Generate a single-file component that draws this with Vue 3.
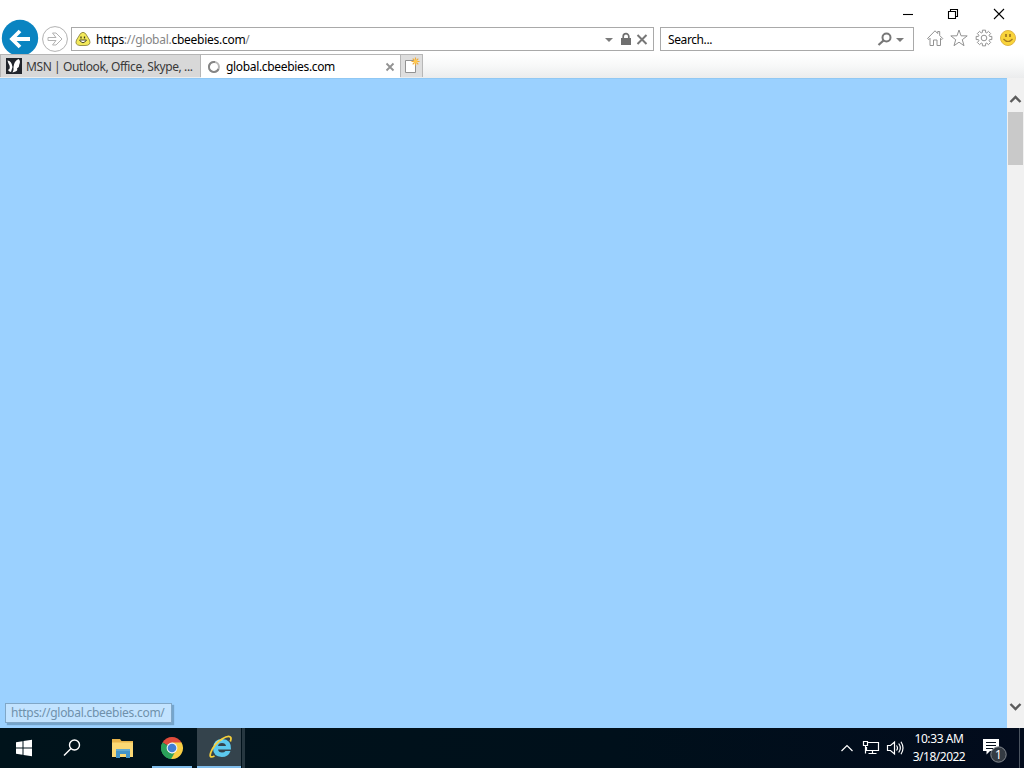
<template>
  <div class="desktop">
    <header class="chrome">
      <div class="window-buttons">
        <svg class="win-btn" viewBox="0 0 46 27"><path d="M17 14.5h10" /></svg>
        <svg class="win-btn" viewBox="0 0 46 27"><path d="M16.500 11.500h7v7h-7zM18.500 11.500v-2h7v7h-2" /></svg>
        <svg class="win-btn" viewBox="0 0 46 27"><path d="M16 9l10 10M26 9l-10 10" /></svg>
      </div>

      <div class="nav-row">
        <svg class="back" viewBox="0 0 38 38">
          <circle cx="19" cy="19" r="18.200" fill="#0a84c1" />
          <path d="M29 20H11M19 12l-8 8 8 8" fill="none" stroke="#fff" stroke-width="3.800" />
        </svg>
        <svg class="forward" viewBox="0 0 28 28">
          <circle cx="14" cy="14" r="12.400" fill="#fff" stroke="#b2b2b2" />
          <path d="M7 12.500h8l-3.500-4.500h3.500l6 6-6 6h-3.500l3.500-4.500H7z" fill="#fff" stroke="#b2b2b2" />
        </svg>

        <div class="field address">
          <svg class="favicon" viewBox="0 0 16 16">
            <path d="M5.500 2.500Q8 0 10.500 2.500L14.500 9Q16.500 14.500 10 14.500H5Q-.5 14 1.500 9z" fill="#f3e95a" stroke="#8f8740" stroke-width=".9" />
            <path d="M4.500 9Q8 14.500 11.500 9z" fill="#fff" stroke="#4d4920" stroke-width="1" />
            <path d="M6 5.500v2M9.500 5.500v2" stroke="#3b3817" stroke-width="1.300" />
          </svg>
          <span class="url"><b>https</b>://global.<b>cbeebies.com</b>/</span>
          <svg class="address-tools" viewBox="0 0 48 22">
            <path d="M4 10h8l-4 4z" fill="#7b7b7b" />
            <rect x="20" y="10" width="10" height="7" fill="#6f6f6f" />
            <path d="M22.200 10V8.500a2.800 2.800 0 0 1 5.600 0V10" fill="none" stroke="#6f6f6f" stroke-width="1.700" />
            <path d="M36.500 7l9 9M45.500 7l-9 9" stroke="#777" stroke-width="2" />
          </svg>
        </div>

        <div class="field search">
          <span class="placeholder">Search...</span>
          <svg class="search-tools" viewBox="0 0 36 22">
            <circle cx="10.500" cy="9.500" r="4" fill="none" stroke="#777" stroke-width="2" />
            <path d="M7.500 12.500l-5 4.500" stroke="#777" stroke-width="2.300" />
            <path d="M20 10h8l-4 4z" fill="#7b7b7b" />
          </svg>
        </div>

        <div class="toolbar">
          <svg viewBox="0 0 18 18"><path d="M1.500 9.500L9 1.800l2.700 2.700V2.500h2v4l3 3-1 1-1.200-1.200v7.200H11v-5.500H7.500v5.500H4V9.300l-1.200 1.200z" /></svg>
          <svg viewBox="0 0 18 18"><path d="M9 1l2 5.800 6.200.1-4.900 3.800 1.700 6L9 13.200l-5 3.500 1.700-6L.8 6.900 7 6.800z" /></svg>
          <svg viewBox="0 0 18 18"><path :d="gearPath" /><circle cx="9" cy="9" r="2.800" /></svg>
          <svg class="smile" viewBox="0 0 18 18">
            <circle class="face" cx="9" cy="9" r="7.500" />
            <path class="eyes" d="M7 5v3M11 5v3" />
            <path class="mouth" d="M4.500 10Q9 15 13.500 10" />
          </svg>
        </div>
      </div>

      <div class="tabs">
        <div class="tab">
          <svg class="tab-icon" viewBox="0 0 16 16">
            <rect width="16" height="16" fill="#20242b" />
            <path d="M1.500 2.500Q5.500 2.500 6.500 9L5 14Q2.500 13.500 2 12Q4.500 11 3.500 7.500Q2 5 1.500 2.500zM6.500 14.500Q8 12 7.500 9Q8 3 12.500 1Q15 3 13.300 6.500Q13.500 9 11 10.500Q12 12.500 9.500 13.500z" fill="#fff" />
          </svg>
          <span class="msn-label">MSN | Outlook, Office, Skype, ...</span>
        </div>
        <div class="tab active">
          <svg class="tab-icon" viewBox="0 0 16 16">
            <circle cx="8" cy="8" r="5" fill="none" stroke="#b8b8b8" stroke-width="2" />
            <path d="M12.500 10A5 5 0 1 1 9 3.100" fill="none" stroke="#858585" stroke-width="2" />
          </svg>
          <span class="page-label">global.cbeebies.com</span>
          <svg class="tab-close" viewBox="0 0 10 10"><path d="M1.500 1.500l7 7M8.500 1.500l-7 7" /></svg>
        </div>
        <div class="new-tab">
          <svg viewBox="0 0 20 22">
            <path d="M4.500 5.500h10v12h-10z" fill="#fff" stroke="#929292" />
            <path d="M14.500 2.500v8M10.500 6.500h8M11.700 3.700l5.600 5.600M17.300 3.700l-5.600 5.600" stroke="#efaa38" stroke-width="1.200" />
            <circle cx="14.500" cy="6.500" r="2" fill="#ffc84e" />
          </svg>
        </div>
      </div>
    </header>

    <main class="viewport">
      <div class="page">
        <div class="status"><span>https://global.cbeebies.com/</span></div>
      </div>
      <div class="scrollbar">
        <svg class="arrow up" viewBox="0 0 17 12"><path d="M3.500 9l5-5 5 5" /></svg>
        <div class="thumb"></div>
        <svg class="arrow down" viewBox="0 0 17 12"><path d="M3.500 4l5 5 5-5" /></svg>
      </div>
    </main>

    <footer class="taskbar">
      <div class="task">
        <svg viewBox="0 0 48 40"><path d="M16 14.200l6.500-1v6.300H16zM23.500 13l8.500-1.200v7.700h-8.500zM16 20.500h6.500v6.300l-6.500-1zM23.500 20.500H32v7.700L23.500 27z" fill="#fff" /></svg>
      </div>
      <div class="task">
        <svg viewBox="0 0 48 40"><circle cx="26.500" cy="17" r="5" fill="none" stroke="#fff" stroke-width="1.400" /><path d="M23 20.500L16 27.500" stroke="#fff" stroke-width="1.500" /></svg>
      </div>
      <div class="task explorer">
        <svg viewBox="0 0 48 40">
          <path d="M14 11h8l1.500 2H35v16H14z" fill="#e8b44a" />
          <path d="M14 14.500h21V29H14" fill="#fbd874" />
          <path d="M18 30v-8h14v8h-4v-4h-6v4z" fill="#4494c8" />
          <path d="M18 21h14v2H18z" fill="#62a9d0" />
        </svg>
      </div>
      <div class="task running google">
        <svg viewBox="0 0 40 40">
          <path d="M20 20L10.500 14.500A11 11 0 0 1 29.500 14.500z" fill="#df4c3c" />
          <path d="M20 20V31A11 11 0 0 1 10.500 14.500z" fill="#2ba15a" />
          <path d="M20 20L29.500 14.500A11 11 0 0 1 19 31L24 22z" fill="#f9ce44" />
          <path d="M20 14.500h9.500L24.700 22.800 19 31l-3.700-8.300z" fill="#f9ce44" />
          <path d="M15.200 22.800L20 25.500 22.500 25 19 31A11 11 0 0 1 10.500 14.500z" fill="#2ba15a" />
          <circle cx="20" cy="20" r="5.400" fill="#edf3fa" />
          <circle cx="20" cy="20" r="4.300" fill="#427fd4" />
        </svg>
      </div>
      <div class="task running current">
        <svg viewBox="0 0 44 40">
          <path fill-rule="evenodd" d="M34 21.500H21Q21.500 24.500 25 24.500Q27.500 24.500 28.500 23H33.500Q31.500 29 24.800 29Q16 28.500 16 20Q16.500 11 25.300 11Q34.500 11.500 34 21.500zM21 18h8q-.5-3-4-3t-4 3z" fill="#5cc9ee" />
          <path d="M17.500 17Q19.500 12 25.500 12" fill="none" stroke="#b1edfc" stroke-width="1" />
          <path d="M17.500 28Q11.500 31 13.800 24.500Q17 16 25 11Q32 6.700 33.800 9.500Q34.500 11 33.300 13.500" fill="none" stroke="#f5cf3c" stroke-width="1.800" />
        </svg>
      </div>
      <div class="task-edge"></div>

      <div class="tray">
        <svg class="chevron" viewBox="0 0 14 10"><path d="M1.500 8L7 2.500 12.500 8" /></svg>
        <svg class="network" viewBox="0 0 18 16"><path d="M6 2.500h10.500v8H4.500V7M10.500 10.500v3M6.500 13.500h8M1.500 1.500h4v4h-4zM3.500 5.500v8" /></svg>
        <svg class="volume" viewBox="0 0 18 16"><path d="M1.500 5.500h3l4-3.500v12l-4-3.500h-3zM10.500 5.500q2 2.500 0 5M12.700 3.500q3.300 4.500 0 9M15 1.700q4 6.300 0 12.600" /></svg>
        <div class="clock">
          <span class="time">10:33 AM</span>
          <span class="date">3/18/2022</span>
        </div>
        <svg class="notice" viewBox="0 0 26 26">
          <path d="M1 2h16v12H8l-3.500 3.500V14H1z" fill="#fff" />
          <path d="M4 5.500h10M4 8.500h10M4 11.500h7" stroke="#07111e" stroke-width="1.100" />
          <circle cx="16.500" cy="17.500" r="7.700" fill="#343b43" stroke="#858a90" />
          <text x="16.500" y="22" text-anchor="middle">1</text>
        </svg>
        <div class="show-desktop"></div>
      </div>
    </footer>
  </div>
</template>

<script setup>
// outline of an 8-tooth cog centred on 9,9
const points = [];
for (let i = 0; i < 8; i++) {
  const base = (i * Math.PI) / 4;
  [[-0.28, 5.8], [-0.2, 8], [0.2, 8], [0.28, 5.8]].forEach(([offset, r]) => {
    const x = 9 + r * Math.cos(base + offset);
    const y = 9 + r * Math.sin(base + offset);
    points.push(`${x.toFixed(2)} ${y.toFixed(2)}`);
  });
}
const gearPath = `M${points.join('L')}Z`;
</script>

<style>
body {
  overflow: hidden;
}
</style>

<style scoped>
.desktop {
  width: 1024px;
  height: 768px;
  display: flex;
  flex-direction: column;
  overflow: hidden;
  font: 12px/16px "Noto Sans", "Open Sans", sans-serif;
  color: #000;
}

.desktop * {
  box-sizing: border-box;
}

svg {
  display: block;
  flex: none;
}

.chrome {
  height: 78px;
  flex: none;
  background: linear-gradient(#fff 0, #fff 54px, #f7f8f8 66px, #ebeced 78px);
}

.window-buttons {
  height: 27px;
  display: flex;
  justify-content: flex-end;
}

.win-btn {
  width: 46px;
  height: 27px;
  fill: none;
  stroke: #000;
  stroke-width: 1.1;
}

.nav-row {
  height: 27px;
  display: flex;
  align-items: flex-start;
}

.back {
  width: 38px;
  height: 38px;
  margin: -8px 0 0 1px;
}

.forward {
  width: 28px;
  height: 28px;
  margin: -2px 2px 0 2px;
}

.field {
  height: 24px;
  border: 1px solid #a9a9a9;
  background: #fff;
  display: flex;
  align-items: center;
  white-space: nowrap;
}

.address {
  width: 583px;
  padding-left: 3px;
}

.favicon {
  width: 16px;
  height: 16px;
}

.url {
  width: 154px;
  margin-left: 5px;
  padding-top: 2px;
  letter-spacing: -0.27px;
  color: #858585;
}

.url b {
  font-weight: 400;
  color: #000;
}

.address-tools {
  width: 48px;
  height: 22px;
  margin-left: auto;
  margin-right: 4px;
}

.search {
  width: 254px;
  margin-left: 6px;
  padding-left: 7px;
}

.placeholder {
  padding-top: 2px;
  letter-spacing: -0.4px;
}

.search-tools {
  width: 36px;
  height: 22px;
  margin-left: auto;
  margin-right: 1px;
}

.toolbar {
  display: flex;
  gap: 6.3px;
  margin: 2px 0 0 12px;
}

.toolbar svg {
  width: 18px;
  height: 18px;
  fill: #fff;
  stroke: #929292;
  stroke-width: 1;
}

.smile .face {
  fill: #f9d43a;
  stroke: #e0b544;
}

.smile .eyes {
  stroke: #99701f;
  stroke-width: 1.6;
}

.smile .mouth {
  fill: none;
  stroke: #a47a20;
  stroke-width: 1.2;
}

.tabs {
  position: relative;
  height: 24px;
  display: flex;
}

.tab {
  width: 201px;
  height: 23px;
  display: flex;
  align-items: center;
  padding-left: 5px;
  border: solid #b5b5b5;
  border-width: 1px 1px 0 1px;
  background: #d8d8d8;
  color: #393939;
  white-space: nowrap;
}

.tab.active {
  width: 199px;
  height: 24px;
  padding-left: 5px;
  border-left: 0;
  border-right: 0;
  background: #fff;
  color: #000;
}

.tab-icon {
  width: 16px;
  height: 16px;
  margin-right: 4px;
}

.msn-label {
  padding-top: 1px;
  letter-spacing: -0.4px;
}

.page-label {
  padding-top: 1px;
  letter-spacing: -0.33px;
}

.tab-close {
  width: 10px;
  height: 10px;
  margin-left: auto;
  margin-right: 5px;
  stroke: #929292;
  stroke-width: 1.8;
}

.new-tab {
  width: 23px;
  height: 23px;
  border: 1px solid #b7b7b7;
  border-bottom: 0;
  background: #dedede;
}

.new-tab svg {
  width: 20px;
  height: 22px;
}

.viewport {
  height: 650px;
  flex: none;
  display: flex;
}

.page {
  width: 1007px;
  background: #9bd1ff;
  border-top: 1px solid #90c8f4;
  display: flex;
  align-items: flex-end;
  padding: 0 0 5px 5px;
}

.status {
  width: 167px;
  height: 20px;
  border: 1px solid #80a7c7;
  background: #c2e3ff;
  box-shadow: 2px 2px 1px #75a5cc;
  color: #6f91ac;
  padding: 1px 0 0 5px;
  letter-spacing: -0.27px;
  white-space: nowrap;
}

.scrollbar {
  width: 17px;
  background: #f1f1f1;
  display: flex;
  flex-direction: column;
  padding-top: 15px;
}

.arrow {
  width: 17px;
  height: 12px;
  fill: none;
  stroke: #5c5c5c;
  stroke-width: 2.4;
}

.thumb {
  width: 15px;
  height: 53px;
  margin: 7px 0 0 1px;
  background: #c9c9c9;
}

.down {
  margin-top: auto;
  margin-bottom: 16px;
}

.taskbar {
  height: 40px;
  flex: none;
  display: flex;
  background: linear-gradient(90deg, #00131b, #00101b 60%, #020b1c);
  color: #fff;
}

.task {
  width: 48px;
  height: 40px;
}

.task svg {
  width: 48px;
  height: 40px;
}

.explorer {
  margin-left: 2px;
  width: 54px;
}

.running {
  border-bottom: 2px solid #80bdeb;
}

.google {
  width: 40px;
}

.google svg {
  width: 40px;
}

.current {
  width: 44px;
  margin-left: 5px;
  background: #34434c;
}

.current svg {
  width: 44px;
}

.task-edge {
  width: 3px;
  margin-left: 1px;
  background: #263740;
}

.tray {
  margin-left: auto;
  display: flex;
  align-items: center;
}

.chevron,
.network,
.volume {
  fill: none;
  stroke: #fff;
  stroke-width: 1.2;
}

.chevron {
  width: 14px;
  height: 10px;
}

.network {
  width: 18px;
  height: 16px;
  margin-left: 8px;
}

.volume {
  width: 18px;
  height: 16px;
  margin-left: 6px;
}

.clock {
  width: 54px;
  margin-left: 8px;
  display: flex;
  flex-direction: column;
  align-items: center;
  line-height: 18px;
  white-space: nowrap;
}

.time {
  letter-spacing: -0.4px;
}

.date {
  letter-spacing: -0.5px;
}

.notice {
  width: 26px;
  height: 26px;
  margin-left: 16px;
  margin-top: 4px;
}

.notice text {
  fill: #fff;
  font-size: 12px;
}

.show-desktop {
  width: 5px;
  height: 40px;
  margin-left: 11px;
  border-left: 1px solid #4b5460;
}
</style>
